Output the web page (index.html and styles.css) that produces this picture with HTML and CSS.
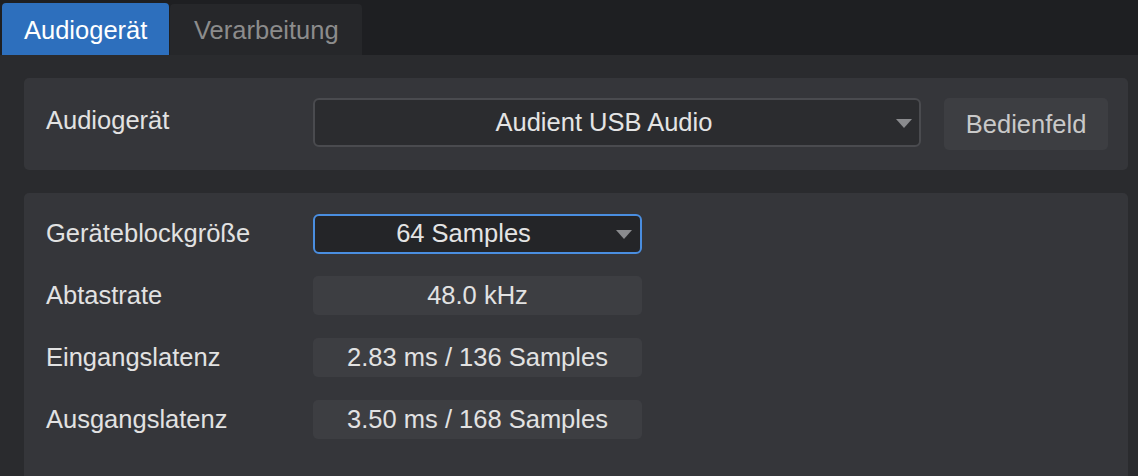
FILE: index.html
```html
<!DOCTYPE html>
<html lang="de">
<head>
<meta charset="utf-8">
<link rel="stylesheet" href="styles.css">
</head>
<body>
<div class="app">
  <div class="tabs">
    <div class="tab active">Audiogerät</div>
    <div class="tab">Verarbeitung</div>
  </div>
  <div class="panel">
    <div class="card device">
      <div class="label">Audiogerät</div>
      <div class="select big">
        <span class="sel-text">Audient USB Audio</span>
        <span class="arrow"></span>
      </div>
      <div class="button">Bedienfeld</div>
    </div>
    <div class="card settings">
      <div class="row">
        <div class="label">Geräteblockgröße</div>
        <div class="select small focus">
          <span class="sel-text">64 Samples</span>
          <span class="arrow"></span>
        </div>
      </div>
      <div class="row">
        <div class="label">Abtastrate</div>
        <div class="value">48.0 kHz</div>
      </div>
      <div class="row">
        <div class="label">Eingangslatenz</div>
        <div class="value">2.83 ms / 136 Samples</div>
      </div>
      <div class="row">
        <div class="label">Ausgangslatenz</div>
        <div class="value">3.50 ms / 168 Samples</div>
      </div>
    </div>
  </div>
</div>
</body>
</html>
```

FILE: styles.css
```css
* { box-sizing: border-box; }
html, body {
  margin: 0;
  padding: 0;
  width: 1138px;
  height: 476px;
  overflow: hidden;
  background: #1e1f22;
  font-family: "Liberation Sans", Arial, sans-serif;
  font-size: 25.5px;
  color: #e2e2e2;
}
.app {
  display: flex;
  flex-direction: column;
  height: 476px;
}
.tabs {
  display: flex;
  align-items: flex-end;
  height: 55px;
  padding-left: 2px;
  gap: 1px;
  background: #1e1f22;
}
.tab {
  height: 51px;
  padding: 2px 23px 0 24px;
  display: flex;
  align-items: center;
  background: #26272a;
  color: #8c8c8c;
  border-radius: 4px 4px 0 0;
}
.tab.active {
  height: 52px;
  width: 167px;
  padding-left: 22px;
  background: #2d6fbd;
  color: #ffffff;
}
.panel {
  flex: 1;
  background: #2a2b2e;
  padding: 23px 10px 0 24px;
  display: flex;
  flex-direction: column;
  gap: 23px;
}
.card {
  background: #35363a;
  border-radius: 5px;
}
.device {
  display: flex;
  align-items: flex-start;
  padding: 20px 20px 20px 22px;
  height: 92px;
}
.device .label {
  width: 267px;
  padding-top: 8px;
}
.select {
  position: relative;
  display: flex;
  align-items: center;
  justify-content: center;
  background: #2b2c2f;
  border: 2px solid #4a4b4f;
  border-radius: 6px;
  color: #e4e4e4;
}
.select.big {
  width: 609px;
  height: 49px;
  padding-right: 26px;
}
.select.small {
  width: 329px;
  height: 40px;
  padding-right: 28px;
}
.select.focus {
  border-color: #4a8ee0;
  background: #242528;
}
.arrow {
  position: absolute;
  right: 8px;
  top: 50%;
  margin-top: -4px;
  width: 0;
  height: 0;
  border-left: 8px solid transparent;
  border-right: 8px solid transparent;
  border-top: 9px solid #8a8b8e;
}
.big .arrow { right: 7px; }
.button {
  margin-left: 23px;
  width: 164px;
  height: 52px;
  display: flex;
  align-items: center;
  justify-content: center;
  background: #3d3e42;
  border-radius: 5px;
  color: #c9c9c9;
}
.settings {
  flex: 1;
  border-radius: 5px 5px 0 0;
  padding: 21px 22px 0 22px;
  display: flex;
  flex-direction: column;
  gap: 23px;
}
.row {
  display: flex;
  align-items: center;
  height: 39px;
}
.row .label {
  width: 267px;
}
.value {
  width: 329px;
  height: 39px;
  display: flex;
  align-items: center;
  justify-content: center;
  background: #3d3e42;
  border-radius: 5px;
  color: #e2e2e2;
}
```
